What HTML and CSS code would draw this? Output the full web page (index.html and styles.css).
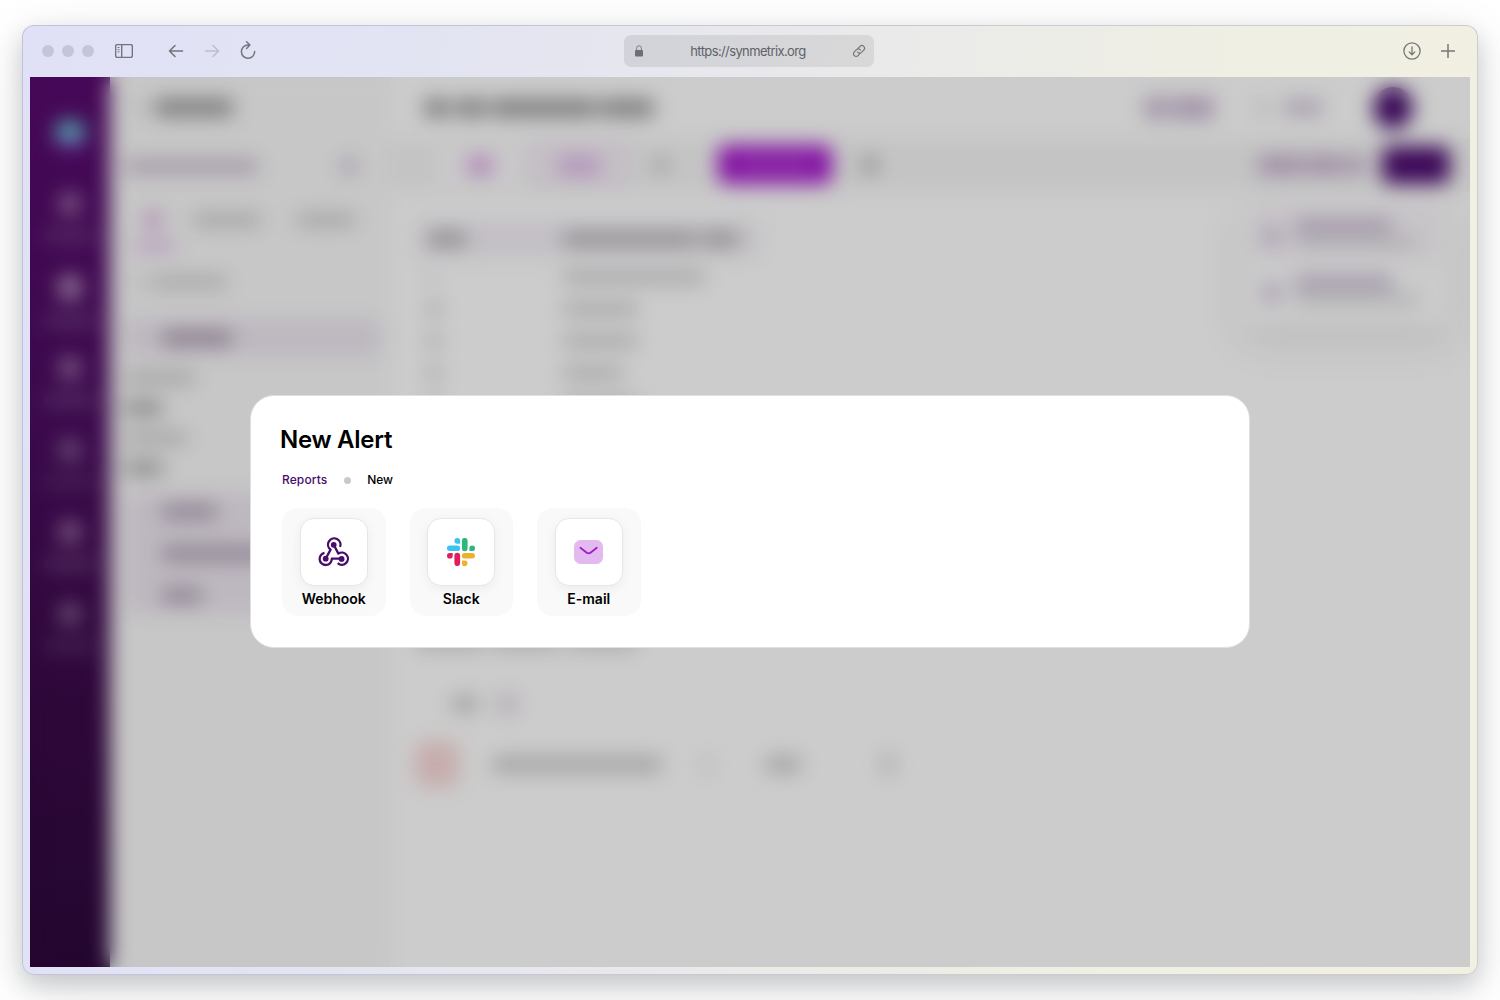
FILE: index.html
```html
<!DOCTYPE html>
<html lang="en">
<head>
<meta charset="utf-8">
<title>New Alert</title>
<link rel="stylesheet" href="styles.css">
</head>
<body>
<div class="window">
  <header class="chrome">
    <div class="chrome-left">
      <span class="light"></span><span class="light"></span><span class="light"></span>
      <svg class="ic-panel" width="18" height="14" viewBox="0 0 18 14" fill="none" stroke="#74747f" stroke-width="1.4"><rect x=".65" y=".65" width="16.7" height="12.7" rx="1.6"/><path d="M6.7 1v12"/><path d="M2.5 3.5h2M2.5 5.7h2M2.5 7.9h2" stroke-width="1"/></svg>
      <svg class="ic-back" width="16" height="14" viewBox="0 0 16 14" fill="none" stroke="#74747f" stroke-width="1.6" stroke-linecap="round" stroke-linejoin="round"><path d="M14.5 7H1.5M7 1.5 1.5 7 7 12.5"/></svg>
      <svg class="ic-fwd" width="16" height="14" viewBox="0 0 16 14" fill="none" stroke="#bdbecd" stroke-width="1.6" stroke-linecap="round" stroke-linejoin="round"><path d="M1.5 7h13M9 1.5 14.5 7 9 12.5"/></svg>
      <svg class="ic-reload" width="16" height="18" viewBox="0 0 16 18" fill="none" stroke="#74747f" stroke-width="1.5" stroke-linecap="round" stroke-linejoin="round"><path d="M9.6 4H8a6.6 6.6 0 1 0 6.6 6.4M6.6.8 9.9 4 6.6 7.4"/></svg>
    </div>
    <div class="address">
      <svg width="10" height="12" viewBox="0 0 10 12"><rect x="1" y="5" width="8" height="6.5" rx="1" fill="#6d6e78"/><path d="M2.6 5.5V3.2a2.4 2.4 0 0 1 4.8 0v2.3" fill="none" stroke="#7b7c85" stroke-width="1"/></svg>
      <span class="url">https://synmetrix.org</span>
      <svg width="14" height="14" viewBox="0 0 14 14" fill="none" stroke="#74747c" stroke-width="1.2" stroke-linecap="round"><g transform="rotate(-45 7 7)"><path d="M5.8 9.5H3a2.6 2.6 0 0 1 0-5.2h3.2a2.6 2.6 0 0 1 2.5 3"/><path d="M8.2 4.5H11a2.6 2.6 0 0 1 0 5.2H7.8a2.6 2.6 0 0 1-2.5-3"/></g></svg>
    </div>
    <div class="chrome-right">
      <svg width="18" height="18" viewBox="0 0 18 18" fill="none" stroke="#777" stroke-width="1.3" stroke-linecap="round" stroke-linejoin="round"><circle cx="9" cy="9" r="8.1"/><path d="M9 5v7.6M6.2 9.9 9 12.7l2.8-2.8"/></svg>
      <svg width="14" height="14" viewBox="0 0 14 14" stroke="#777" stroke-width="1.5"><path d="M7 0v14M0 7h14"/></svg>
    </div>
  </header>

  <div class="screen">
    <div class="app">
      <nav class="rail">
        <i class="logo"></i>
        <div class="rail-item"><i></i><b></b></div>
        <div class="rail-item strong"><i></i><b></b></div>
        <div class="rail-item"><i></i><b></b></div>
        <div class="rail-item dim"><i></i><b></b></div>
        <div class="rail-item"><i></i><b></b></div>
        <div class="rail-item dim"><i></i><b></b></div>
      </nav>
      <aside class="explore">
        <div class="explore-title"><i class="bar chevron"></i><i class="bar heading"></i></div>
        <div class="source"><i class="bar"></i><i class="bar dot"></i></div>
        <div class="tabs"><i class="bar tab-on"></i><i class="bar tab-b"></i><i class="bar tab-c"></i></div>
        <i class="underline"></i>
        <div class="search"><i class="bar lens"></i><i class="bar hint"></i></div>
        <div class="cube"><i class="bar"></i></div>
        <div class="fields"><i class="bar group-a"></i><i class="bar field-a"></i><i class="bar group-b"></i><i class="bar field-b"></i></div>
        <div class="cubes"><i class="bar cube-a"></i><i class="bar cube-b"></i><i class="bar cube-c"></i></div>
      </aside>
      <main class="content">
        <div class="topbar">
          <i class="bar name-a"></i><i class="bar name-b"></i><i class="bar name-c"></i><i class="bar name-d"></i>
          <div class="top-right"><i class="bar docs-icon"></i><i class="bar docs"></i><i class="bar flag"></i><i class="bar team"></i><i class="avatar"></i></div>
        </div>
        <div class="toolbar">
          <span class="seg"><i class="bar"></i></span>
          <span class="seg seg-sql"><i class="bar"></i></span>
          <i class="bar tool"></i>
          <span class="run"><i></i></span>
          <i class="bar tool gear"></i>
          <div class="tool-right"><i class="bar act-a"></i><i class="bar act-b"></i><i class="bar act-c"></i><span class="save"></span></div>
        </div>
        <div class="table">
          <div class="tr th"><i class="bar"></i><i class="bar val"></i><i class="bar unit"></i></div>
          <div class="tr r1"><i class="bar"></i><i class="bar val"></i></div>
          <div class="tr r2"><i class="bar"></i><i class="bar val"></i></div>
          <div class="tr r3"><i class="bar"></i><i class="bar val"></i></div>
          <div class="tr r4"><i class="bar"></i><i class="bar val"></i></div>
          <div class="tr r2"><i class="bar"></i><i class="bar val"></i></div>
        </div>
        <div class="summary"><i class="bar"></i><i class="bar"></i><i class="bar"></i></div>
        <div class="filters-head"><i class="bar"></i><i class="bar count"></i></div>
        <div class="filter-row"><i class="remove"></i><i class="bar dim-name"></i><i class="bar caret"></i><i class="bar op"></i><i class="bar arrows"></i></div>
      </main>
      <div class="menu">
        <div class="menu-item on"><i class="bar mark"></i><div><i class="bar line"></i><i class="bar sub"></i></div></div>
        <div class="menu-item"><i class="bar mark"></i><div><i class="bar line"></i><i class="bar sub"></i></div></div>
      </div>
    </div>
    <div class="overlay"></div>
    <section class="modal">
      <h1>New Alert</h1>
      <div class="crumbs"><span class="crumb-link">Reports</span><i></i><span class="crumb-now">New</span></div>
      <div class="cards">
        <div class="card"><div class="tile">
          <svg width="32" height="30" viewBox="0 0 32 30" fill="none" stroke="#470d69" stroke-width="2.3" stroke-linejoin="round">
            <path d="M22 9.9A6.2 6.2 0 1 0 12.6 12.6L7.9 21.3"/>
            <path d="M15.7 7.8 20.4 16.6A6.1 6.1 0 1 1 19.7 26.2"/>
            <path d="M6.5 15.9A6.1 6.1 0 1 0 13.8 21.7H23.5"/>
            <g fill="#470d69" stroke="none"><circle cx="15.7" cy="7.8" r="2.9"/><circle cx="7.7" cy="21.7" r="2.9"/><circle cx="23.6" cy="21.9" r="2.9"/></g>
          </svg></div><span>Webhook</span></div>
        <div class="card"><div class="tile">
          <svg width="28" height="28" viewBox="0 0 28 28">
            <path fill="#36c5f0" d="M10.3 0a2.8 2.8 0 1 0 0 5.7h2.8V2.8A2.8 2.8 0 0 0 10.3 0zM10.3 7.4H2.8a2.85 2.85 0 1 0 0 5.7h7.5a2.85 2.85 0 1 0 0-5.7z"/>
            <path fill="#2eb67d" d="M28 10.3a2.8 2.8 0 1 0-5.6 0v2.8h2.8a2.8 2.8 0 0 0 2.8-2.8zM20.6 10.3V2.8a2.85 2.85 0 1 0-5.7 0v7.5a2.85 2.85 0 1 0 5.7 0z"/>
            <path fill="#ecb22e" d="M17.7 28a2.8 2.8 0 1 0 0-5.6h-2.8v2.8a2.8 2.8 0 0 0 2.8 2.8zM17.7 20.6h7.5a2.85 2.85 0 1 0 0-5.7h-7.5a2.85 2.85 0 1 0 0 5.7z"/>
            <path fill="#e01e5a" d="M0 17.7a2.8 2.8 0 1 0 5.7 0v-2.8H2.8A2.8 2.8 0 0 0 0 17.7zM7.4 17.7v7.5a2.85 2.85 0 1 0 5.7 0v-7.5a2.85 2.85 0 1 0-5.7 0z"/>
          </svg></div><span>Slack</span></div>
        <div class="card"><div class="tile">
          <svg width="29" height="24" viewBox="0 0 29 24" fill="none"><rect width="29" height="24" rx="6.5" fill="#e3baef"/><path d="M6.4 7.8l6 4.7a3.6 3.6 0 0 0 4.4 0l6-4.7" stroke="#a31bcb" stroke-width="1.8" stroke-linecap="round"/></svg>
        </div><span>E-mail</span></div>
      </div>
    </section>
  </div>
</div>
</body>
</html>
```
FILE: styles.css
```css
* { box-sizing: border-box; }
body { margin: 0; width: 1500px; height: 1000px; padding: 25px 22px; overflow: hidden; background: #fff; font-family: Inter, "Liberation Sans", sans-serif; }
i, b { display: block; flex: none; }
svg { display: block; flex: none; }

.window { width: 1456px; height: 950px; border: 1px solid rgba(110, 110, 150, .27); border-radius: 12px; padding: 0 7px; background: linear-gradient(100deg, #e0e1f6 0%, #e2e3f3 22%, #e9e9eb 50%, #efefe4 75%, #f2f0e1 100%) border-box; box-shadow: 0 10px 22px rgba(40, 50, 65, .18), 0 12px 50px rgba(0, 0, 0, .12); }

.chrome { height: 51px; padding-bottom: 2px; display: grid; grid-template-columns: 594px 250px 1fr; align-items: center; }
.chrome-left, .chrome-right { display: flex; align-items: center; }
.chrome-left { padding-left: 12px; }
.light { width: 12px; height: 12px; margin-right: 8px; border-radius: 50%; background: #c5c5d9; }
.ic-panel { margin-left: 13px; }
.ic-back { margin-left: 35px; }
.ic-fwd { margin-left: 20px; }
.ic-reload { margin: -2px 0 0 20px; }
.chrome-right { justify-content: flex-end; gap: 20px; padding-right: 15px; }
.address { height: 32px; display: flex; align-items: center; justify-content: space-between; padding: 0 8px 0 10px; border-radius: 7px; background: linear-gradient(100deg, #d2d3da, #d8d8d8); }
.url { font: 13px/16px Inter, sans-serif; letter-spacing: -.62px; color: #606168; }

.screen { position: relative; height: 890px; overflow: hidden; }
.app { position: relative; height: 890px; display: grid; grid-template-columns: 80px 280px 1fr; background: #fff; }
.overlay { position: absolute; inset: 0; background: rgba(0, 0, 0, .2); backdrop-filter: blur(10px); }
.bar { height: 12px; border-radius: 3px; background: #c8c8c8; }

.rail { display: flex; flex-direction: column; align-items: center; padding-top: 44px; background: linear-gradient(#580a6e, #4a0c5f 40%, #3a0948 70%, #2c083c); }
.logo { width: 28px; height: 28px; margin-bottom: 45px; border-radius: 10px; background: linear-gradient(#68dade 72%, #8a28c0 72%); }
.rail-item { height: 82px; display: flex; flex-direction: column; align-items: center; gap: 18px; }
.rail-item i { width: 20px; height: 20px; border-radius: 5px; background: #a47aaa; }
.rail-item b { width: 50px; height: 8px; background: #7a528a; }
.rail-item.strong i { width: 22px; height: 23px; background: #b998c0; }
.rail-item.dim i { background: #8a6a98; }
.rail-item.dim b { background: #613d72; }

.explore { padding: 0 8px 0 15px; border-right: 1px solid #f4f4f4; background: #f9f9f9; }
.explore-title { height: 61px; display: flex; align-items: center; padding-left: 10px; }
.chevron { width: 8px; background: #d6d6d6; margin-right: 12px; }
.heading { width: 78px; height: 17px; background: #999; }
.source { height: 56px; display: flex; align-items: center; }
.source .bar { width: 133px; height: 13px; background: #c7b8cd; }
.source .bar.dot { width: 14px; height: 14px; margin-left: 84px; background: #c2b2ce; }
.tabs { height: 51px; display: flex; align-items: center; padding-left: 20px; }
.tab-on { width: 16px; height: 16px; background: #d9a5e0; }
.tab-b { width: 68px; margin-left: 32px; }
.tab-c { width: 58px; margin-left: 36px; }
.underline { width: 40px; height: 4px; margin-left: 10px; margin-top: -1px; background: #c064d6; }
.search { height: 68px; display: flex; align-items: center; padding-left: 8px; }
.lens { width: 8px; background: #dadada; margin-right: 10px; }
.hint { width: 76px; background: #cdcdcd; }
.cube, .cubes { border-radius: 6px; background: #ede6f0; }
.cube { height: 37px; margin-top: 3px; display: flex; align-items: center; padding-left: 37px; }
.cube .bar { width: 70px; height: 14px; background: #a596a9; }
.fields { height: 138px; padding-top: 16px; display: flex; flex-direction: column; gap: 18px; }
.group-a { width: 70px; }
.field-a { width: 37px; background: #9a9a9a; }
.group-b { width: 62px; }
.field-b { width: 38px; background: #a0a0a0; }
.cubes { height: 121px; margin-top: -1px; padding: 12px 0 0 37px; display: flex; flex-direction: column; gap: 29px; }
.cubes .bar { height: 13px; background: #a99bae; }
.cube-a { width: 55px; }
.cube-b { width: 120px; }
.cube-c { width: 40px; }

.topbar { height: 61px; display: flex; align-items: center; gap: 6px; padding-left: 34px; }
.topbar > .bar { height: 18px; background: #9b9b9b; }
.name-a { width: 26px; }
.name-b { width: 30px; }
.name-c { width: 105px; margin-left: -1px; }
.name-d { width: 54px; margin-left: -2px; }
.top-right { display: flex; align-items: center; margin-left: auto; padding-right: 57px; }
.docs-icon, .docs { height: 22px; background: #c8b6d1; }
.docs-icon { width: 22px; }
.docs { width: 43px; margin-left: 4px; }
.flag { width: 14px; margin-left: 41px; background: #dedede; }
.team { width: 38px; height: 13px; margin-left: 15px; background: #c9b8d2; }
.avatar { width: 40px; height: 42px; margin-left: 51px; border-radius: 50%; background: #470b6c; }
.toolbar { height: 54px; display: flex; align-items: center; padding-left: 47px; background: #f6f6f6; }
.seg { width: 86px; height: 38px; display: grid; place-items: center; background: #fdfbfe; border-radius: 6px; }
.seg .bar { width: 24px; height: 17px; background: #d79de3; }
.seg-sql { width: 92px; margin-left: 10px; border: 2px solid #dfb5e8; background: #f9f5fa; }
.seg-sql .bar { width: 44px; height: 15px; background: #daaee6; }
.tool { width: 16px; height: 15px; margin-left: 28px; background: #c8c8c8; }
.run { width: 114px; height: 39px; margin: -1px 0 0 49px; border-radius: 8px; background: #a618cd; display: grid; place-items: center; }
.run i { width: 70px; height: 8px; background: #ba54d4; }
.gear { height: 18px; margin-left: 30px; background: #bababa; }
.tool-right { display: flex; align-items: center; margin-left: auto; padding-right: 20px; }
.tool-right .bar { height: 20px; background: #c8b2ce; }
.act-a { width: 45px; }
.act-b { width: 37px; margin-left: 3px; }
.act-c { width: 18px; margin-left: 4px; }
.save { width: 68px; height: 38px; margin: -1px 0 0 17px; border-radius: 8px; background: #4c0c70; }

.table { margin: 29px 0 0 28px; width: 340px; }
.tr { height: 32px; display: grid; grid-template-columns: 135px auto 1fr; align-items: center; padding-left: 10px; }
.tr .bar { width: 12px; height: 12px; background: #c0c0c0; }
.th { height: 36px; margin-bottom: 4px; background: #f4eff6; }
.th .bar { width: 38px; height: 14px; background: #afacb0; }
.th .bar.val { width: 134px; }
.th .bar.unit { width: 34px; margin-left: 6px; }
.tr .bar.val { background: #ccc; }
.tr.th .bar.val { background: #b3b0b5; }
.tr.r1 .bar { width: 6px; background: #d0d0d0; }
.tr.r1 .bar.val { width: 142px; background: #ccc; }
.r2 .bar.val { width: 75px; }
.r3 .bar.val { width: 74px; }
.r4 .bar.val { width: 60px; }
.summary { display: flex; gap: 8px; margin: 216px 0 0 26px; }
.summary .bar { width: 68px; height: 10px; background: #c0c0c0; }
.filters-head { height: 26px; display: flex; align-items: center; gap: 19px; margin: 44px 0 0 62px; }
.filters-head .bar { width: 26px; height: 14px; background: #c4c4c4; }
.filters-head .bar.count { width: 20px; height: 18px; background: #e0d5e6; }
.filter-row { height: 46px; display: flex; align-items: center; margin: 24px 0 0 25px; }
.remove { width: 44px; height: 46px; border-radius: 12px; background: #fad8d8; }
.filter-row .bar { height: 15px; background: #c8c8c8; }
.filter-row .dim-name { width: 168px; margin-left: 34px; }
.filter-row .caret { width: 8px; margin-left: 42px; background: #dcdcdc; }
.filter-row .op { width: 34px; margin-left: 55px; }
.filter-row .arrows { width: 10px; height: 22px; margin-left: 83px; background: #d2d2d2; }

.menu { position: absolute; left: 1210px; top: 122px; width: 212px; height: 126px; padding: 5px 10px; border-radius: 8px; background: #fefefe; box-shadow: 0 16px 40px rgba(0, 0, 0, .09); }
.menu-item { height: 57px; display: flex; align-items: center; gap: 13px; padding-left: 12px; }
.menu-item.on { background: #faf6fb; }
.mark { width: 20px; height: 20px; margin-top: 7px; background: #dacce2; }
.menu-item .line { width: 97px; height: 13px; background: #c6b7d1; }
.menu-item .sub { width: 122px; height: 8px; margin-top: 6px; background: #d0cdd2; }

.modal { position: absolute; left: 220px; top: 318px; width: 1000px; height: 253px; padding: 27px 30px; border: 1px solid #e0e0e0; border-radius: 24px; background: #fff; color: #000; }
h1 { margin: 0 0 0 -1px; font-size: 24px; line-height: 34px; font-weight: 600; letter-spacing: -.28px; }
.crumbs { display: flex; align-items: center; margin: 14px 0 0 1px; font-size: 12px; line-height: 18px; font-weight: 500; letter-spacing: .1px; }
.crumbs i { width: 7px; height: 7px; margin: 0 16px 0 17px; border-radius: 50%; background: #c9c9c9; }
.crumb-link { color: #470d69; }
.crumb-now { letter-spacing: -.1px; }
.cards { display: flex; gap: 24px; margin: 19px 0 0 1px; }
.card { width: 103.5px; height: 108px; padding-top: 10px; display: flex; flex-direction: column; align-items: center; border-radius: 16px; background: #f9f9f9; font-size: 14px; line-height: 20px; font-weight: 600; overflow: hidden; }
.tile { width: 68px; height: 68px; margin-bottom: 3px; display: grid; place-items: center; border: 1px solid #e6e6e6; border-radius: 14px; background: #fff; box-shadow: 0 3px 12px rgba(0, 0, 0, .055); }
```
